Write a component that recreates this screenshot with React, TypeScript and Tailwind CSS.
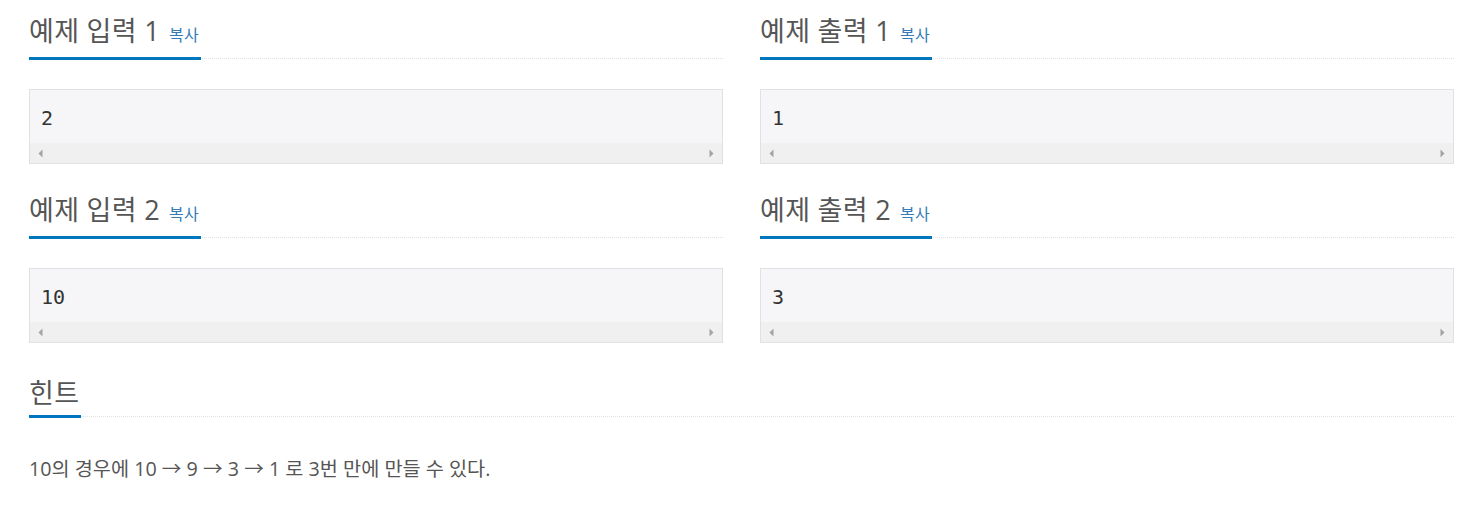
import React from "react";

const FONT = { fontFamily: '"Open Sans", "Noto Sans CJK KR", sans-serif' };

function Headline({ title, copy }: { title: string; copy?: boolean }) {
  return (
    <div className="border-b border-dotted border-[#e0e0e0] h-[59px] flex items-end">
      <h2 className="inline-block border-b-[3px] border-[#0076c0] mb-[-2px] pb-[7px] pr-[2px] text-[27px] leading-[30px] text-[#555] font-normal whitespace-nowrap tracking-[0.3px]">
        {title}
        {copy && (
          <span className="ml-[9px] text-[16px] text-[#337ab7] align-baseline tracking-[0.3px]">복사</span>
        )}
      </h2>
    </div>
  );
}

function Tri({ dir }: { dir: "l" | "r" }) {
  return (
    <svg width="5" height="9" viewBox="0 0 5 9">
      {dir === "l" ? (
        <polygon points="4.5,0.5 0.5,4.5 4.5,8.5" fill="#a3a3a3" />
      ) : (
        <polygon points="0.5,0.5 4.5,4.5 0.5,8.5" fill="#a3a3a3" />
      )}
    </svg>
  );
}

function Sample({ value }: { value: string }) {
  return (
    <div className="mt-[30px] border border-[#e1e1e4] bg-[#f6f6f8] h-[75px] flex flex-col">
      <pre
        className="flex-1 px-[11px] pt-[12px] text-[20px] leading-[32px] text-[#333]"
        style={{ fontFamily: '"DejaVu Sans Mono", monospace' }}
      >
        {value}
      </pre>
      <div className="h-[20px] bg-[#f0f0f0] flex items-center justify-between px-[8px]">
        <Tri dir="l" />
        <Tri dir="r" />
      </div>
    </div>
  );
}

function Block({ title, value }: { title: string; value: string }) {
  return (
    <div className="w-[694px]">
      <Headline title={title} copy />
      <Sample value={value} />
    </div>
  );
}

export default function App() {
  return (
    <div className="bg-white w-[1477px] h-[506px] pl-[29px] pr-[23px]" style={FONT}>
      <div className="flex gap-[37px]">
        <Block title="예제 입력 1" value="2" />
        <Block title="예제 출력 1" value="1" />
      </div>
      <div className="flex gap-[37px] mt-[15px]">
        <Block title="예제 입력 2" value="10" />
        <Block title="예제 출력 2" value="3" />
      </div>
      <div className="mt-[15px]">
        <Headline title="힌트" />
        <p className="mt-[38px] text-[19.7px] leading-[28px] text-[#555]">
          10의 경우에 10 → 9 → 3 → 1 로 3번 만에 만들 수 있다.
        </p>
      </div>
    </div>
  );
}
